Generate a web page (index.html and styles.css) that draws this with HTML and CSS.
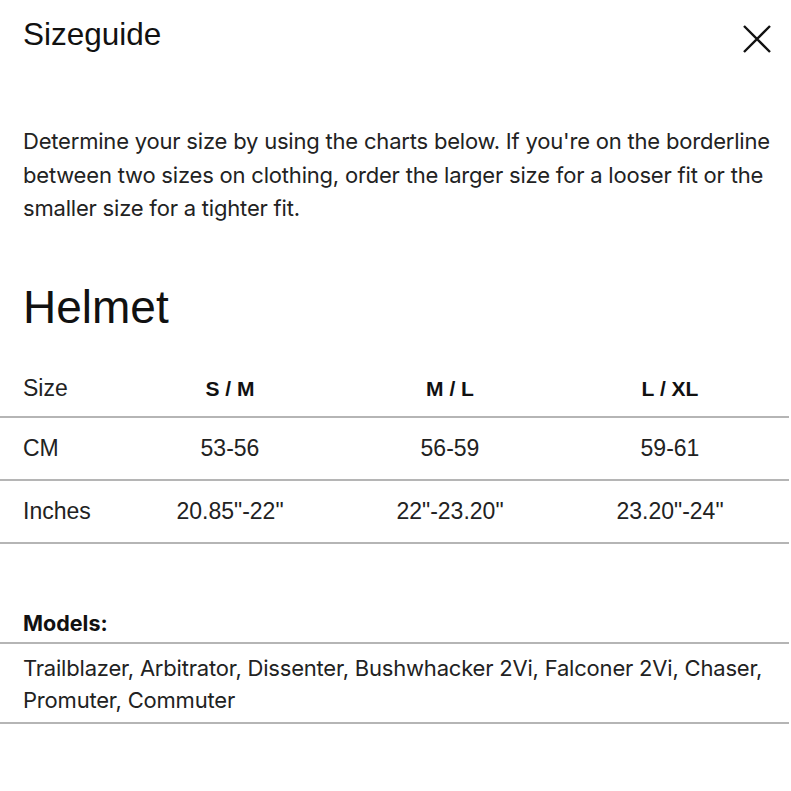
FILE: index.html
```html
<!DOCTYPE html>
<html>
<head>
<meta charset="utf-8">
<link rel="stylesheet" href="styles.css">
</head>
<body>
<div class="modal">
  <header class="head">
    <h1 class="title">Sizeguide</h1>
    <button class="close" aria-label="Close">
      <svg width="28" height="28" viewBox="0 0 28 28"><path d="M1 1 L27 27 M27 1 L1 27" stroke="#111" stroke-width="2.4" fill="none"/></svg>
    </button>
  </header>
  <p class="intro">Determine your size by using the charts below. If you're on the borderline between two sizes on clothing, order the larger size for a looser fit or the smaller size for a tighter fit.</p>
  <h2 class="section">Helmet</h2>
  <div class="table">
    <div class="row head-row">
      <div class="cell label">Size</div>
      <div class="cell strong">S / M</div>
      <div class="cell strong">M / L</div>
      <div class="cell strong">L / XL</div>
    </div>
    <div class="row">
      <div class="cell label">CM</div>
      <div class="cell">53-56</div>
      <div class="cell">56-59</div>
      <div class="cell">59-61</div>
    </div>
    <div class="row">
      <div class="cell label">Inches</div>
      <div class="cell">20.85"-22"</div>
      <div class="cell">22"-23.20"</div>
      <div class="cell">23.20"-24"</div>
    </div>
  </div>
  <div class="models">
    <div class="models-title">Models:</div>
    <div class="models-list">Trailblazer, Arbitrator, Dissenter, Bushwhacker 2Vi, Falconer 2Vi, Chaser, Promuter, Commuter</div>
  </div>
</div>
</body>
</html>
```
FILE: styles.css
```css
html, body { margin: 0; padding: 0; background: #fff; }
body { font-family: "Liberation Sans", Arial, sans-serif; color: #111; }
.modal { width: 789px; }
.head { display: flex; justify-content: space-between; align-items: flex-start; padding: 16px 18px 0 23px; }
.title { margin: 0; font-weight: 400; font-size: 31.5px; line-height: 37px; color: #111; }
.close { border: 0; background: none; padding: 0; margin-top: 9px; width: 28px; height: 28px; cursor: pointer; }
.close svg { display: block; }
.intro { margin: 72px 0 0; padding: 0 14px 0 23px; font-family: Inter, "Liberation Sans", sans-serif; font-size: 22px; line-height: 33.5px; color: #222; letter-spacing: -0.2px; }
.section { margin: 56px 0 0 23px; font-weight: 400; font-size: 46px; line-height: 50px; color: #111; }
.table { margin-top: 26px; }
.row { display: grid; grid-template-columns: 120px 220px 220px 220px; height: 61px; align-items: center; border-bottom: 2px solid #b5b5b5; font-size: 23px; color: #222; }
.head-row { height: 60px; padding-top: 4px; box-sizing: border-box; }
.cell { text-align: center; }
.cell.label { text-align: left; padding-left: 23px; }
.strong { font-weight: 700; font-size: 21px; color: #111; }
.models { margin-top: 66px; }
.models-title { padding: 0 0 6px 23px; font-family: Inter, "Liberation Sans", sans-serif; font-weight: 700; font-size: 21.5px; line-height: 26px; color: #111; border-bottom: 2px solid #b5b5b5; }
.models-list { padding: 8px 14px 6px 23px; font-family: Inter, "Liberation Sans", sans-serif; font-size: 22px; line-height: 32px; color: #222; letter-spacing: -0.2px; border-bottom: 2px solid #b5b5b5; }
```
